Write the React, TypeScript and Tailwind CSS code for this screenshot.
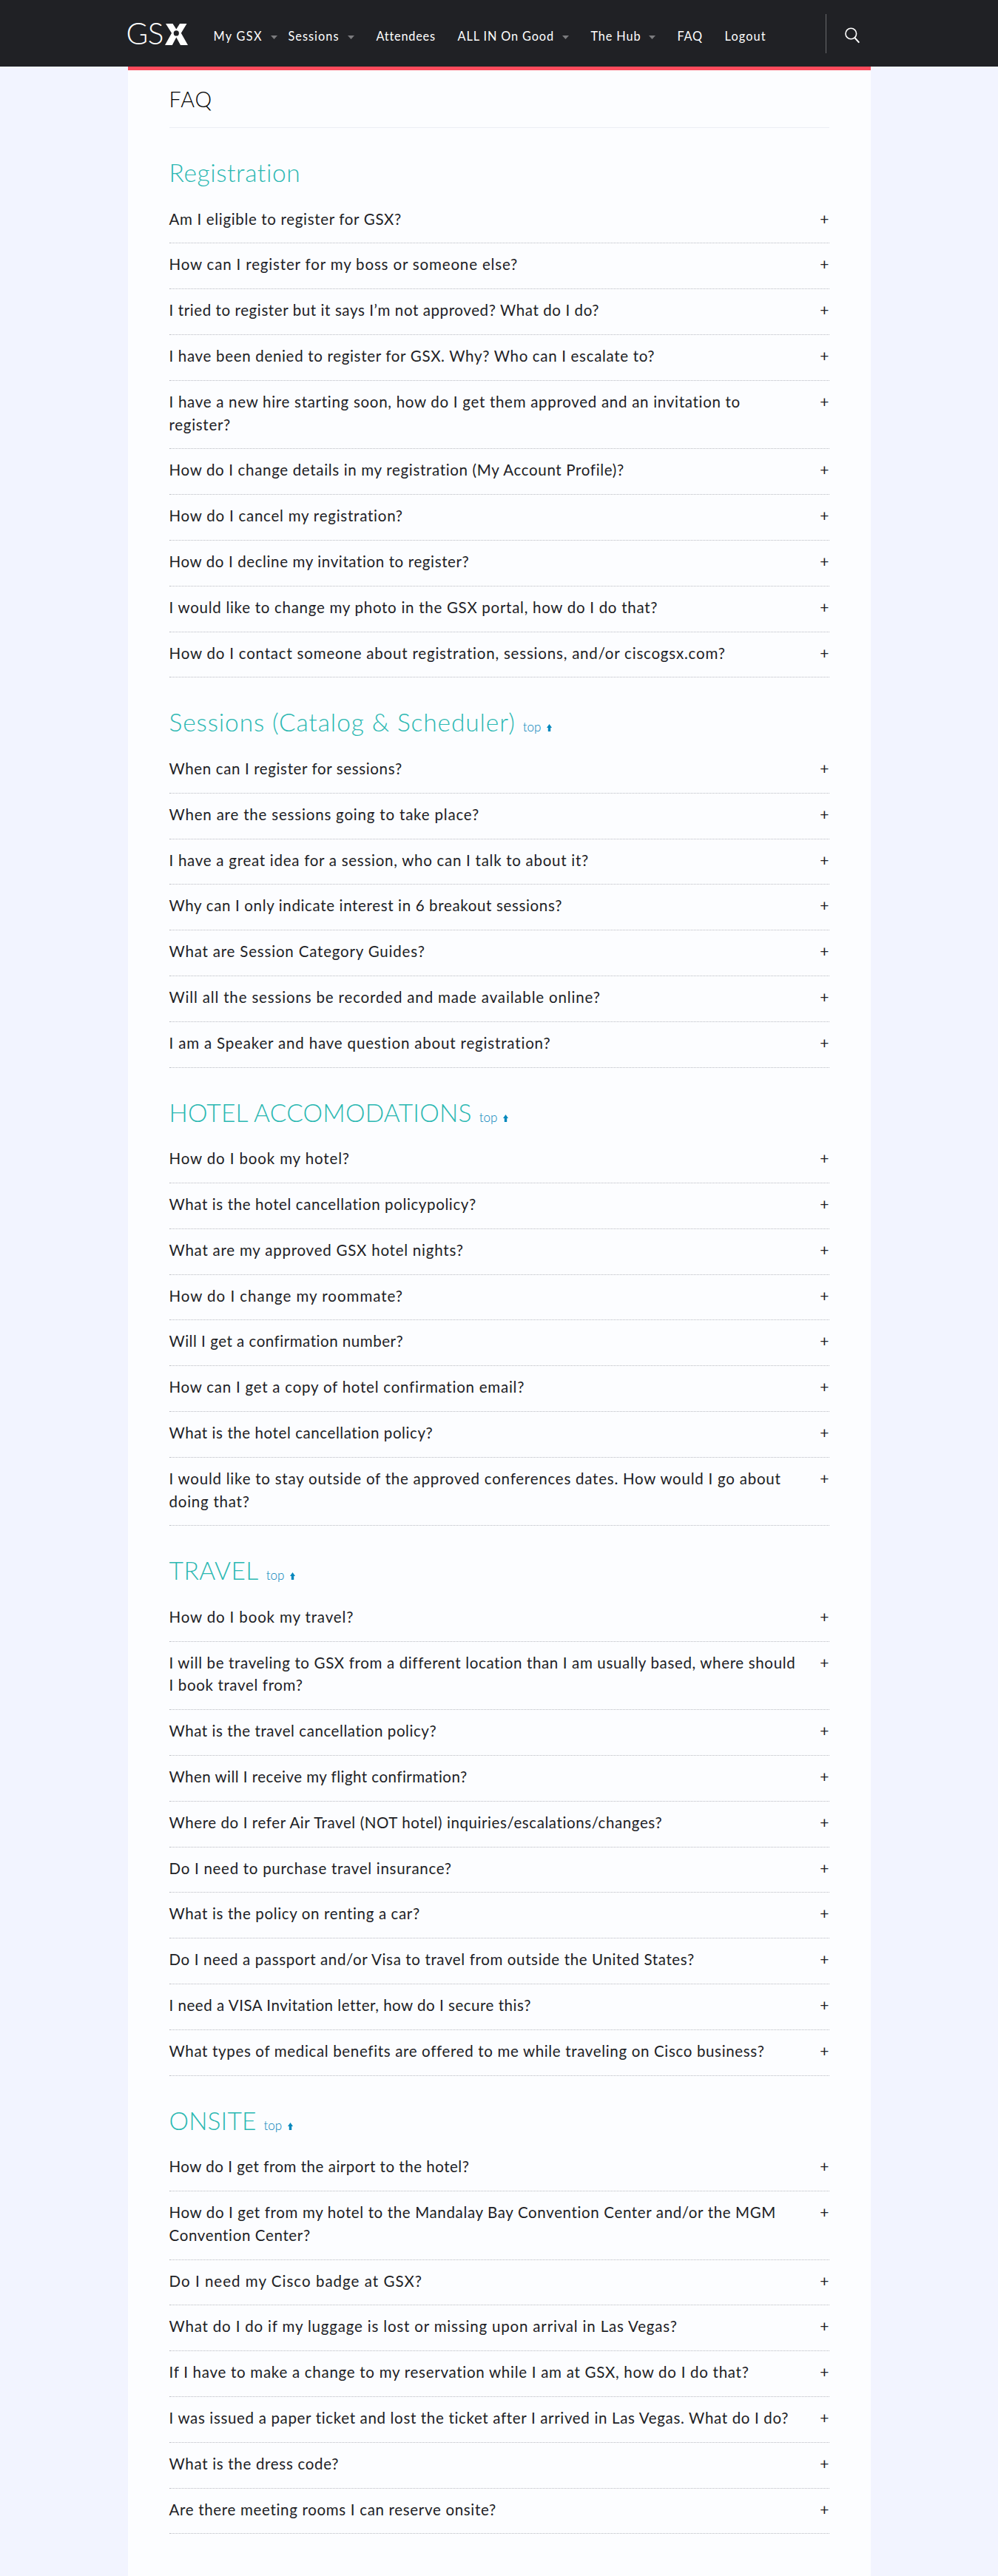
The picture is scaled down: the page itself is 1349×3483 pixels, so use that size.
import React from "react";

type Item = { q: string; track: string };
type Section = { title: string; track: string; top?: boolean; items: Item[] };

const sections: Section[] = [
  {
    title: "Registration",
    track: "tracking-[0.6px]",
    items: [
      { q: "Am I eligible to register for GSX?", track: "tracking-[0.67px]" },
      { q: "How can I register for my boss or someone else?", track: "tracking-[0.84px]" },
      { q: "I tried to register but it says I’m not approved? What do I do?", track: "tracking-[0.6px]" },
      { q: "I have been denied to register for GSX. Why? Who can I escalate to?", track: "tracking-[0.68px]" },
      { q: "I have a new hire starting soon, how do I get them approved and an invitation to register?", track: "tracking-[0.71px]" },
      { q: "How do I change details in my registration (My Account Profile)?", track: "tracking-[0.67px]" },
      { q: "How do I cancel my registration?", track: "tracking-[0.76px]" },
      { q: "How do I decline my invitation to register?", track: "tracking-[0.62px]" },
      { q: "I would like to change my photo in the GSX portal, how do I do that?", track: "tracking-[0.72px]" },
      { q: "How do I contact someone about registration, sessions, and/or ciscogsx.com?", track: "tracking-[0.8px]" },
    ],
  },
  {
    title: "Sessions (Catalog & Scheduler)",
    track: "tracking-[0.89px]",
    top: true,
    items: [
      { q: "When can I register for sessions?", track: "tracking-[0.63px]" },
      { q: "When are the sessions going to take place?", track: "tracking-[0.81px]" },
      { q: "I have a great idea for a session, who can I talk to about it?", track: "tracking-[0.73px]" },
      { q: "Why can I only indicate interest in 6 breakout sessions?", track: "tracking-[0.65px]" },
      { q: "What are Session Category Guides?", track: "tracking-[0.81px]" },
      { q: "Will all the sessions be recorded and made available online?", track: "tracking-[0.84px]" },
      { q: "I am a Speaker and have question about registration?", track: "tracking-[0.83px]" },
    ],
  },
  {
    title: "HOTEL ACCOMODATIONS",
    track: "tracking-[0.22px]",
    top: true,
    items: [
      { q: "How do I book my hotel?", track: "tracking-[0.87px]" },
      { q: "What is the hotel cancellation policypolicy?", track: "tracking-[0.62px]" },
      { q: "What are my approved GSX hotel nights?", track: "tracking-[0.77px]" },
      { q: "How do I change my roommate?", track: "tracking-[0.97px]" },
      { q: "Will I get a confirmation number?", track: "tracking-[0.52px]" },
      { q: "How can I get a copy of hotel confirmation email?", track: "tracking-[0.76px]" },
      { q: "What is the hotel cancellation policy?", track: "tracking-[0.58px]" },
      { q: "I would like to stay outside of the approved conferences dates. How would I go about doing that?", track: "tracking-[0.765px]" },
    ],
  },
  {
    title: "TRAVEL",
    track: "tracking-[0.48px]",
    top: true,
    items: [
      { q: "How do I book my travel?", track: "tracking-[0.86px]" },
      { q: "I will be traveling to GSX from a different location than I am usually based, where should I book travel from?", track: "tracking-[0.65px]" },
      { q: "What is the travel cancellation policy?", track: "tracking-[0.57px]" },
      { q: "When will I receive my flight confirmation?", track: "tracking-[0.475px]" },
      { q: "Where do I refer Air Travel (NOT hotel) inquiries/escalations/changes?", track: "tracking-[0.59px]" },
      { q: "Do I need to purchase travel insurance?", track: "tracking-[0.72px]" },
      { q: "What is the policy on renting a car?", track: "tracking-[0.64px]" },
      { q: "Do I need a passport and/or Visa to travel from outside the United States?", track: "tracking-[0.635px]" },
      { q: "I need a VISA Invitation letter, how do I secure this?", track: "tracking-[0.525px]" },
      { q: "What types of medical benefits are offered to me while traveling on Cisco business?", track: "tracking-[0.66px]" },
    ],
  },
  {
    title: "ONSITE",
    track: "tracking-[0.12px]",
    top: true,
    items: [
      { q: "How do I get from the airport to the hotel?", track: "tracking-[0.52px]" },
      { q: "How do I get from my hotel to the Mandalay Bay Convention Center and/or the MGM Convention Center?", track: "tracking-[0.64px]" },
      { q: "Do I need my Cisco badge at GSX?", track: "tracking-[1.02px]" },
      { q: "What do I do if my luggage is lost or missing upon arrival in Las Vegas?", track: "tracking-[0.82px]" },
      { q: "If I have to make a change to my reservation while I am at GSX, how do I do that?", track: "tracking-[0.725px]" },
      { q: "I was issued a paper ticket and lost the ticket after I arrived in Las Vegas. What do I do?", track: "tracking-[0.665px]" },
      { q: "What is the dress code?", track: "tracking-[0.69px]" },
      { q: "Are there meeting rooms I can reserve onsite?", track: "tracking-[0.68px]" },
    ],
  },
];

const nav = [
  { label: "My GSX", cls: "w-[101px] tracking-[1.33px]", caret: true },
  { label: "Sessions", cls: "w-[119px] tracking-[1.03px]", caret: true },
  { label: "Attendees", cls: "w-[110px] tracking-[0.79px]" },
  { label: "ALL IN On Good", cls: "w-[180px] tracking-[0.88px]", caret: true },
  { label: "The Hub", cls: "w-[117px] tracking-[0.88px]", caret: true },
  { label: "FAQ", cls: "w-[64px] tracking-[0.73px]" },
  { label: "Logout", cls: "tracking-[1.13px]" },
];

function Logo() {
  return (
    <a className="mt-[25px] flex h-10 w-[115px] text-white">
      <span className="-ml-[2px] w-[52px] text-[40.5px] leading-10 font-light tracking-[-0.6px]">GS</span>
      <svg className="mt-[6px] h-[31px] w-[31px] shrink-0" viewBox="0 0 31 31">
        <polygon fill="#fff" points="1,1 10.5,1 15.3,8.5 20,1 29.5,1 21.8,13.8 31,30 21,30 15.3,19.5 9.8,30 0,30 9,13.8" />
        <circle cx="15.3" cy="13.9" r="3.6" fill="#202125" />
      </svg>
    </a>
  );
}

function Header() {
  return (
    <header className="h-[90px] bg-[#202125]">
      <div className="mx-auto flex h-full w-[1004px] items-start">
        <Logo />
        <nav className="mt-[39px] ml-px flex text-[16.3px] leading-5 whitespace-nowrap text-white">
          {nav.map((n) => (
            <a key={n.label} className={`flex items-center ${n.cls}`}>
              {n.label}
              {n.caret && (
                <svg className="mt-[3px] ml-[11px] h-[5px] w-[9px]" viewBox="0 0 9 5">
                  <polygon points="0,0 9,0 4.5,5" fill="#7b7b7e" />
                </svg>
              )}
            </a>
          ))}
        </nav>
        <div className="mt-[19px] ml-auto flex h-[53px] w-[61px] border-l border-[#6a6a6d] pl-[25px]">
          <svg className="mt-[18px] h-[22px] w-[22px]" viewBox="0 0 22 22" fill="none" stroke="#fff" strokeWidth="1.6">
            <circle cx="8.3" cy="8.5" r="7.3" />
            <path d="M13.3 14 L19.3 20.6" strokeWidth="2" />
          </svg>
        </div>
      </div>
    </header>
  );
}

function TopLink() {
  return (
    <a className="ml-[10px] text-[17px] font-light text-[#0080b8]">
      top
      <svg className="ml-[8px] inline-block h-[10px] w-[7px] align-baseline" viewBox="0 0 7 10">
        <path d="M3.5 0 L7 5 H5.2 V10 H1.8 V5 H0 Z" fill="#0488bd" />
      </svg>
    </a>
  );
}

export default function App() {
  return (
    <div className="min-h-[3483px] bg-[#f2f4ff] font-['Lato',sans-serif] text-[#202125]">
      <Header />
      <main className="mx-auto min-h-[3393px] w-[1004px] border-t-[5px] border-[#fd4b5c] bg-[#fcfdff] px-14">
        <h1 className="h-[78px] border-b border-[#eceef4] pt-[22px] text-[28.6px] leading-[34px] font-light tracking-[1.1px] text-black">FAQ</h1>
        {sections.map((s) => (
          <section key={s.title}>
            <div className="h-[94.6px] pt-10 leading-10 whitespace-nowrap">
              <h2 className={`inline text-[33.5px] font-light text-[#2bb8b2] ${s.track}`}>{s.title}</h2>
              {s.top && <TopLink />}
            </div>
            <ul>
              {s.items.map((it) => (
                <li key={it.q} className="flex justify-between border-b border-dotted border-[#b9bbc2] pt-[13px] pb-[17px] text-[20.5px] leading-[30.8px]">
                  <span className={`w-[852px] ${it.track}`}>{it.q}</span>
                  <span className="text-[21px]">+</span>
                </li>
              ))}
            </ul>
          </section>
        ))}
      </main>
    </div>
  );
}
